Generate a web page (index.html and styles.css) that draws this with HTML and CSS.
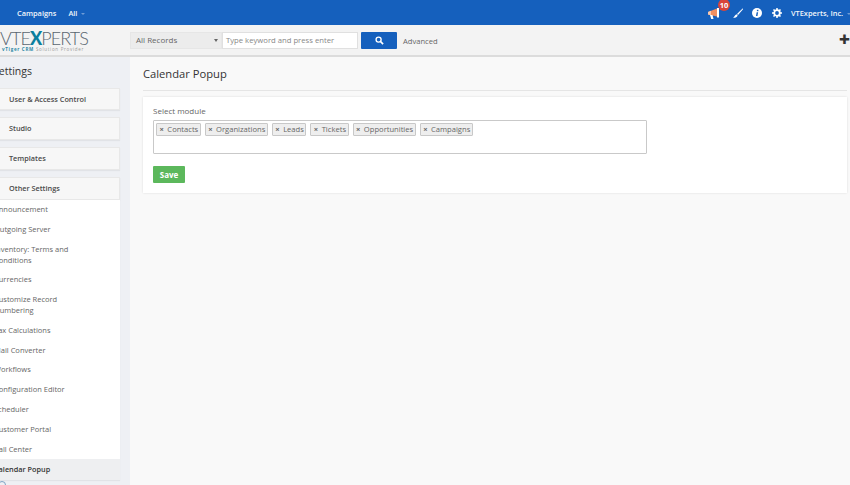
FILE: index.html
```html
<!DOCTYPE html>
<html lang="en">
<head>
<meta charset="utf-8">
<title>Calendar Popup</title>
<link rel="stylesheet" href="styles.css">
</head>
<body>
<div class="topbar">
  <div class="topnav">
    <span class="navlink">Campaigns</span>
    <span class="navlink">All <i class="caret"></i></span>
  </div>
  <div class="topicons">
    <span class="bell">
      <svg width="13" height="11" viewBox="0 0 13 11"><path d="M0 4l9-3.500v8L0 6.500z" fill="#ef8f62"/><path d="M0 4l3-1.200v4.500L0 6.500z" fill="#f6c7ae"/><path d="M9 0h2v9.500H9z" fill="#fff"/><path d="M2 7h2.500l1 4H3.200z" fill="#fff"/></svg>
      <b class="badge">10</b>
    </span>
    <svg class="ic brush" width="10" height="10" viewBox="0 0 10 10"><path d="M9.800.3L4 6l1 1 5-5.800z" fill="#fff"/><path d="M3.500 6.200l1.200 1.200C4 9.200 2 10 0 9.700c1.400-.6 1.800-3 3.500-3.500z" fill="#fff"/></svg>
    <svg class="ic" width="10" height="10" viewBox="0 0 10 10"><circle cx="5" cy="5" r="5" fill="#fff"/><path d="M4.600 4.200h1.500L5.500 8H4z" fill="#1560bd"/><rect x="4.900" y="1.800" width="1.500" height="1.400" fill="#1560bd"/></svg>
    <svg class="ic gear" width="10" height="10" viewBox="0 0 10 10"><circle cx="5" cy="5" r="2.800" fill="none" stroke="#fff" stroke-width="1.800"/><path d="M5 0v2M5 8v2M0 5h2M8 5h2M1.500 1.500l1.400 1.400M7.100 7.100l1.400 1.400M1.500 8.500l1.400-1.400M7.100 2.900l1.400-1.400" stroke="#fff" stroke-width="1.500"/></svg>
    <span class="navlink">VTExperts, Inc. <i class="caret"></i></span>
  </div>
</div>
<div class="header">
  <div class="logo">
    <div class="logomark">VTE<span class="logox">X</span>PERTS</div>
    <div class="logotag"><span class="tagblue">vTiger</span> <span class="tagblue">CRM</span> Solution Provider</div>
  </div>
  <div class="search">
    <div class="select">All Records<i class="selcaret"></i></div>
    <div class="input">Type keyword and press enter</div>
    <div class="searchbtn"><svg width="9" height="9" viewBox="0 0 10 10"><circle cx="4" cy="4" r="2.800" fill="none" stroke="#fff" stroke-width="1.500"/><path d="M6 6l3 3" stroke="#fff" stroke-width="1.800"/></svg></div>
    <span class="advanced">Advanced</span>
  </div>
  <span class="plus">✚</span>
</div>
<div class="body">
  <aside class="sidebar">
    <h2 class="sidetitle">Settings</h2>
    <div class="panel">User &amp; Access Control</div>
    <div class="panel">Studio</div>
    <div class="panel">Templates</div>
    <div class="group">
      <div class="panel grouphead">Other Settings</div>
      <ul class="menu">
        <li>Announcement</li>
        <li>Outgoing Server</li>
        <li>Inventory: Terms and<br>Conditions</li>
        <li>Currencies</li>
        <li>Customize Record<br>Numbering</li>
        <li>Tax Calculations</li>
        <li>Mail Converter</li>
        <li>Workflows</li>
        <li>Configuration Editor</li>
        <li>Scheduler</li>
        <li>Customer Portal</li>
        <li>Call Center</li>
        <li class="active">Calendar Popup</li>
      </ul>
    </div>
    <svg class="cornerlogo" width="8" height="5" viewBox="0 0 8 5"><circle cx="2" cy="5" r="3.500" fill="none" stroke="#7da3c4" stroke-width="1"/></svg>
  </aside>
  <main class="main">
    <h1 class="pagetitle">Calendar Popup</h1>
    <section class="card">
      <label class="fieldlabel">Select module</label>
      <div class="tagbox">
        <span class="tag"><i>×</i>Contacts</span>
        <span class="tag"><i>×</i>Organizations</span>
        <span class="tag"><i>×</i>Leads</span>
        <span class="tag"><i>×</i>Tickets</span>
        <span class="tag"><i>×</i>Opportunities</span>
        <span class="tag"><i>×</i>Campaigns</span>
      </div>
      <button class="save">Save</button>
    </section>
  </main>
</div>
</body>
</html>
```
FILE: styles.css
```css
* { box-sizing: border-box; }
html, body { margin: 0; height: 100%; overflow: hidden; }
body { width: 850px; height: 485px; font-family: "Open Sans", sans-serif; font-size: 8px; color: #555; background: #f9f9f9; display: flex; flex-direction: column; }

.topbar { height: 25px; flex: none; background: #1560bd; display: flex; justify-content: space-between; align-items: center; padding: 0 0 0 17px; }
.topnav { display: flex; gap: 12px; }
.navlink { color: #f2f6fb; font-size: 7.400px; font-weight: 600; white-space: nowrap; }
.caret { display: inline-block; margin-left: 2px; vertical-align: middle; border: 2px solid transparent; border-top: 2.500px solid #6e9bd6; border-bottom: 0; }
.topicons { display: flex; align-items: center; margin-right: -1px; }
.bell { position: relative; display: block; width: 12px; height: 11px; margin: 2px 13px 0 0; }
.bell svg { display: block; }
.badge { position: absolute; left: 10px; top: -9px; width: 12px; height: 12px; border-radius: 50%; background: #d9453a; color: #fff; font-size: 7.500px; font-weight: 700; line-height: 12px; text-align: center; }
.ic { display: block; margin-right: 10px; }
.brush { margin-right: 9px; }
.ic.gear { margin-right: 9px; }

.header { height: 32px; flex: none; background: #f3f3f3; border-bottom: 2px solid #dcdcdc; display: flex; align-items: center; position: relative; }
.logo { width: 130px; flex: none; margin-top: 1px; }
.logomark { font-family: "Lato", sans-serif; font-size: 18px; line-height: 16px; letter-spacing: -.9px; color: #5a6670; font-weight: 300; white-space: nowrap; }
.logox { color: #0b7f9e; font-weight: 900; }
.logotag { font-size: 4.500px; line-height: 6px; letter-spacing: .7px; color: #9a9a9a; margin-left: 2px; white-space: nowrap; }
.tagblue { color: #2a87a5; font-weight: 700; }
.search { display: flex; align-items: center; height: 18px; margin-top: 0; }
.select { width: 92px; height: 17px; background: #ececec; border: 1px solid #e6e6e6; color: #666; line-height: 13.500px; padding-left: 5px; position: relative; }
.selcaret { position: absolute; right: 3px; top: 6px; border: 2px solid transparent; border-top: 3px solid #666; border-bottom: 0; }
.input { width: 136px; height: 17px; background: #fff; border: 1px solid #e0e0e0; color: #888; font-size: 7.700px; line-height: 14px; padding-left: 3px; white-space: nowrap; }
.searchbtn { width: 36px; height: 17px; margin-left: 3px; background: #1560bd; border-radius: 1px; display: flex; align-items: center; justify-content: center; }
.advanced { margin-left: 6px; padding-top: 1px; color: #666; font-size: 7.600px; }
.plus { position: absolute; right: 0; top: 8px; font-size: 13px; line-height: 14px; color: #333; font-family: "DejaVu Sans", sans-serif; }

.body { flex: 1; display: flex; min-height: 0; }
.sidebar { width: 130px; flex: none; background: #eef0f4; padding-right: 10px; }
.sidetitle { margin: 0 0 0 -7px; height: 30.700px; font-size: 10.500px; line-height: 28px; font-weight: 400; color: #333; }
.panel { height: 22.800px; background: #f7f7f7; border: 1px solid #e8e8e8; border-left: 0; box-shadow: 0 1px 1px rgba(0,0,0,.05); padding-left: 9px; font-size: 7.300px; line-height: 20.800px; color: #4a4a4a; font-weight: 600; margin-bottom: 6.900px; }
.group { background: #fff; box-shadow: 0 1px 1px rgba(0,0,0,.05); }
.grouphead { margin: 0; }
.menu { list-style: none; margin: 0; padding: 0; background: #fff; }
.menu li { font-size: 7.500px; line-height: 11px; padding: 4.400px 0; margin-left: -6px; color: #666; }
.menu li.active { background: #eeeff1; color: #333; font-weight: 600; font-size: 7.300px; padding: 5px 0; }
.cornerlogo { display: block; margin-top: 0; }

.main { flex: 1; padding: 0 3px 0 13px; }
.pagetitle { margin: 0; height: 34px; border-bottom: 1px solid #e5e5e5; font-size: 11.200px; font-weight: 400; line-height: 34px; color: #333; }
.card { margin-top: 5.500px; height: 96px; background: #fff; box-shadow: 0 0 2px rgba(0,0,0,.12); padding: 8.500px 10px; }
.fieldlabel { display: block; line-height: 12px; color: #666; }
.tagbox { margin-top: 3px; width: 494px; height: 34px; border: 1px solid #c9c9c9; border-radius: 1px; padding: 1.500px 2px; display: flex; align-items: flex-start; gap: 4px; }
.tag { height: 13px; background: #eee; border: 1px solid #c8c8c8; border-radius: 1px; font-size: 7.600px; line-height: 11px; padding: 0 1.500px 0 2.500px; white-space: nowrap; color: #666; }
.tag i { font-style: normal; font-weight: 700; color: #666; margin-right: 3.500px; }
.save { display: block; margin-top: 11.500px; width: 32px; height: 17px; padding: 0; background: #5cb85c; border: 0; border-radius: 1px; color: #fff; font: 700 8px "Open Sans", sans-serif; }
```
